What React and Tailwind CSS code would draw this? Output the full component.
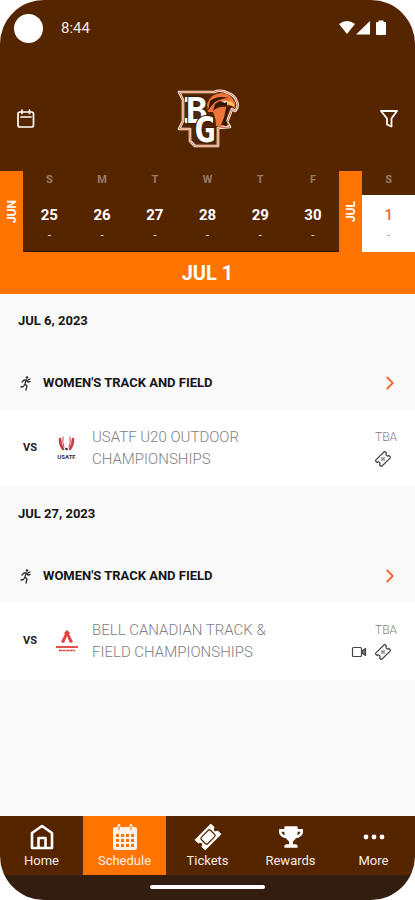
import { ChevronRight } from 'lucide-react';
import { FaTrophy } from 'react-icons/fa';

const juneDays = [
  { letter: 'S', date: 25 },
  { letter: 'M', date: 26 },
  { letter: 'T', date: 27 },
  { letter: 'W', date: 28 },
  { letter: 'T', date: 29 },
  { letter: 'F', date: 30 },
];

const julyDays = [{ letter: 'S', date: 1, selected: true }];

const events = [
  {
    date: 'JUL 6, 2023',
    sport: "WOMEN'S TRACK AND FIELD",
    title: 'USATF U20 OUTDOOR CHAMPIONSHIPS',
    time: 'TBA',
    Logo: UsatfLogo,
    hasVideo: false,
  },
  {
    date: 'JUL 27, 2023',
    sport: "WOMEN'S TRACK AND FIELD",
    title: 'BELL CANADIAN TRACK & FIELD CHAMPIONSHIPS',
    time: 'TBA',
    Logo: AthleticsCanadaLogo,
    hasVideo: true,
  },
];

const tabs = [
  { label: 'Home', Icon: HomeIcon },
  { label: 'Schedule', Icon: ScheduleIcon, active: true },
  { label: 'Tickets', Icon: TicketsIcon },
  { label: 'Rewards', Icon: RewardsIcon },
  { label: 'More', Icon: MoreIcon },
];

function TeamLogo() {
  const outline =
    'M1 2H31L36 2Q43 -1 50 3Q57 5 59 12Q61 17 57 21L54 19Q51 27 49 32L52 37L40 38V56H17L12 51V39H1L5 31V10Z';
  return (
    <svg viewBox="-1 -1 62 59" className="h-[59px] w-[62px] overflow-visible" role="img" aria-label="BG Falcons">
      <path d={outline} fill="#552500" stroke="#fff" strokeWidth="2.6" strokeLinejoin="round" />
      <path d={outline} fill="none" stroke="#e8622a" strokeWidth="1" strokeLinejoin="round" />
      <path d="M29 14Q33 3 44 3Q53 4 57 12Q58 15 56 17Q52 14 48 16Q49 25 46 36L38 36Q38 28 35 22L30 22Z" fill="#ee7439" />
      <path d="M32 11Q39 5 51 8Q44 8 37 12Q33 16 30 21Z" fill="#3a1800" />
      <path d="M37 14Q42 9 48 12L52 14L47 17Q41 16 35 21Z" fill="#3a1800" />
      <path d="M43 11H49L47 13Z" fill="#fff" />
      <path d="M49 11Q56 10 57 18Q53 14 49 15Z" fill="#f7c36a" />
      <path d="M48 18L51 17Q49 24 48 30L50 35H43Q47 27 48 18Z" fill="#3a1800" />
      {/* Serifs of the monogram */}
      <path d="M7 7H14V12H7ZM7 28H14V33H7Z" fill="#fff" />
      <g
        fill="#fff"
        stroke="#3a1800"
        strokeWidth="2"
        paintOrder="stroke"
        fontFamily="'DejaVu Sans Mono', monospace"
        fontWeight="700"
      >
        <text x="8" y="33" fontSize="36">B</text>
        <text x="16" y="52" fontSize="36">G</text>
      </g>
    </svg>
  );
}

function UsatfLogo() {
  return (
    <svg viewBox="0 0 24 24" className="size-6 overflow-visible" role="img" aria-label="USATF">
      <g fill="none" stroke="#c93b47" strokeLinecap="round">
        <path d="M5 3Q5 9 8 13" strokeWidth="2.6" />
        <path d="M8 1Q7 7 9 11" strokeWidth="1" />
        <path d="M18 3Q18 9 15 13" strokeWidth="2.6" />
        <path d="M15 1Q16 7 14 11" strokeWidth="1" />
      </g>
      <circle cx="11.5" cy="13" r="1.3" fill="#1e2a44" />
      <text x="11.5" y="23" fontSize="6" fontWeight="700" textAnchor="middle" fill="#333">
        USATF
      </text>
    </svg>
  );
}

function AthleticsCanadaLogo() {
  return (
    <svg viewBox="0 0 24 24" className="size-6" role="img" aria-label="Athletics Canada">
      <path d="M12 1L15 4L14 5L18 13L15 14L12 7L9 14L6 13L10 5L9 4Z" fill="#e2403c" />
      <path d="M1 18H23" stroke="#e2403c" strokeWidth="1.8" />
      <path d="M4 21.5H20" stroke="#e2403c" strokeWidth="1.6" strokeDasharray="3 .6" />
    </svg>
  );
}

function RunnerIcon() {
  return (
    <svg
      viewBox="0 0 14 16"
      className="h-4 w-[14px] shrink-0"
      fill="none"
      stroke="#333"
      strokeWidth="1.3"
      strokeLinecap="round"
      strokeLinejoin="round"
      aria-hidden="true"
    >
      <circle cx="9" cy="2.5" r="1.3" fill="#333" stroke="none" />
      <path d="M4 7L6 5L8.5 5L10 7L12 6.5M12 4L10 5M8 5.500L7 9L9 11L8 15M7 9L5.500 11.500L3 12" />
    </svg>
  );
}

function VideoIcon() {
  return (
    <svg viewBox="0 0 16 16" className="size-4" fill="none" stroke="#444" strokeWidth="1.2" aria-hidden="true">
      <rect x="1.5" y="3.5" width="9" height="9" rx="1" />
      <path d="M11 7L14.500 4.500V11.500L11 9Z" fill="#777" strokeLinejoin="round" />
    </svg>
  );
}

function TicketIcon() {
  return (
    <svg
      viewBox="0 0 24 24"
      className="size-4"
      fill="none"
      stroke="#444"
      strokeWidth="1.8"
      strokeLinejoin="round"
      aria-hidden="true"
    >
      <g transform="rotate(-45 12 12)">
        <path d="M2 5.500H22V9.500A2.500 2.500 0 0 0 22 14.500V18.500H2V14.500A2.500 2.500 0 0 0 2 9.500Z" />
        <path d="M12 9L13 11.200L15 12L13 12.800L12 15L11 12.800L9 12L11 11.200Z" strokeWidth="1" />
      </g>
    </svg>
  );
}

function HomeIcon() {
  return (
    <svg viewBox="0 0 26 28" className="h-7 w-[26px]" fill="none" stroke="#fff" strokeWidth="2.6" strokeLinejoin="round">
      <path d="M3 10L13 3L23 10V25H3Z" />
      <path d="M9.500 25V15H16.500V25" />
    </svg>
  );
}

function ScheduleIcon() {
  return (
    <svg viewBox="0 0 26 28" className="h-7 w-[26px]">
      <path
        d="M3 4H5.500V2.500A1.500 1.500 0 0 1 8.500 2.500V4H17.500V2.500A1.500 1.500 0 0 1 20.500 2.500V4H23A2 2 0 0 1 25 6V25A2 2 0 0 1 23 27H3A2 2 0 0 1 1 25V6A2 2 0 0 1 3 4Z"
        fill="#fff1e6"
      />
      <path
        d="M4 12.500H23M4 17.500H23M4 22.500H23"
        stroke="#ff7300"
        strokeWidth="3"
        strokeDasharray="3 2"
      />
      <path d="M7 3V7M19 3V7" stroke="#ff7300" strokeWidth="1" />
    </svg>
  );
}

function TicketsIcon() {
  return (
    <svg viewBox="0 0 28 28" className="size-7">
      <g transform="rotate(-45 14 14)">
        <path
          d="M3 7H25V11.500A2.500 2.500 0 0 0 25 16.500V21H3V16.500A2.500 2.500 0 0 0 3 11.500Z"
          fill="#fff"
          stroke="#fff"
          strokeLinejoin="round"
        />
        <rect x="7.500" y="9.500" width="13" height="9" rx="1.500" fill="none" stroke="#552500" strokeWidth="1.2" />
      </g>
    </svg>
  );
}

function RewardsIcon() {
  return <FaTrophy className="size-6 text-white" />;
}

function MoreIcon() {
  return (
    <svg viewBox="0 0 26 28" className="h-7 w-[26px]" fill="#fff">
      <circle cx="5" cy="14" r="2.4" />
      <circle cx="13" cy="14" r="2.4" />
      <circle cx="21" cy="14" r="2.4" />
    </svg>
  );
}

function CalendarIcon() {
  return (
    <svg
      viewBox="0 0 20 20"
      className="size-5"
      fill="none"
      stroke="#fff"
      strokeWidth="1.7"
      strokeLinecap="round"
      aria-hidden="true"
    >
      <rect x="2" y="3" width="15.5" height="15" rx="2" />
      <path d="M5 8H15M6 1V4.500M13.500 1V4.500" />
    </svg>
  );
}

function FilterIcon() {
  return (
    <svg
      viewBox="0 0 20 20"
      className="size-5"
      fill="none"
      stroke="#fff"
      strokeWidth="1.8"
      strokeLinejoin="round"
      aria-hidden="true"
    >
      <path d="M2 2H18L12.500 9.500V17.500L8 15.500V9.500Z" />
    </svg>
  );
}

function StatusBar() {
  return (
    <div className="flex h-14 items-center justify-between pr-7 pl-[14px]">
      <div className="flex items-center gap-[18px]">
        <span className="size-[29px] rounded-full bg-white" />
        <span className="text-[15px] text-[#f3e9e2]">8:44</span>
      </div>
      <svg viewBox="0 0 48 16" className="h-4 w-12" fill="#fff" aria-hidden="true">
        <path d="M0 4Q8 -2 16 4L8 14Z" />
        <path d="M17 14.500L31 1V14.500Z" />
        <path d="M37 3Q37 2 38 2H39.500V0.500H44.500V2H46Q47 2 47 3V14Q47 15 46 15H38Q37 15 37 14Z" />
      </svg>
    </div>
  );
}

function Day({ letter, date, selected }) {
  return (
    <div className="flex min-w-0 flex-1 flex-col text-center font-bold">
      <div className="flex h-6 items-start justify-center pt-[3px] text-[11px] leading-3 text-[#987c68]">{letter}</div>
      <button
        type="button"
        aria-pressed={Boolean(selected)}
        className={
          selected
            ? 'flex h-[57px] flex-col items-center bg-white pt-3 text-[#ef6634]'
            : 'flex h-[57px] flex-col items-center border-b border-[#2f1400] pt-3 text-white'
        }
      >
        <span className={selected ? 'text-[15px] leading-4 font-medium' : 'text-[15px] leading-4'}>{date}</span>
        <span className="text-xs leading-6 font-normal opacity-80">-</span>
      </button>
    </div>
  );
}

function MonthTab({ name }) {
  return (
    <div className="flex w-[23px] shrink-0 items-center justify-center bg-[#ff7300] text-xs font-bold text-white">
      <span className="rotate-180 [writing-mode:vertical-rl]">{name}</span>
    </div>
  );
}

function EventGroup({ event }) {
  const { date, sport, title, time, Logo, hasVideo } = event;
  return (
    <section>
      <h2 className="flex h-[54px] items-center px-[18px] text-[13px] font-bold text-[#161616]">{date}</h2>
      <a href="#sport" className="flex h-[62px] items-center px-[18px] pt-2">
        <RunnerIcon />
        <h3 className="ml-[11px] flex-1 text-[13px] font-bold text-[#161616]">{sport}</h3>
        <ChevronRight className="-mr-1 size-[22px] text-[#f26a2e]" strokeWidth={2} />
      </a>
      <a href="#event" className="flex min-h-[77px] items-start bg-white px-[18px] pt-4 pb-[17px] text-[#808080]">
        <span className="flex h-11 w-6 items-center justify-center text-[11px] font-bold text-[#222]">VS</span>
        <span className="ml-[13px] flex h-11 w-6 items-center justify-center">
          <Logo />
        </span>
        <span className="ml-[13px] w-[190px] text-[15px] leading-[22px] font-light">{title}</span>
        <span className="ml-auto flex flex-col items-end">
          <span className="text-xs leading-[22px] font-light">{time}</span>
          <span className="flex h-[22px] items-center gap-2 pr-[6px]">
            {hasVideo && <VideoIcon />}
            <TicketIcon />
          </span>
        </span>
      </a>
    </section>
  );
}

const App = () => {
  return (
    <div className="min-h-screen bg-white font-['Roboto','Liberation_Sans',sans-serif]">
      <div className="flex min-h-screen flex-col overflow-hidden rounded-[44px] bg-[#f9f9f9]">
        <header className="bg-[#552500]">
          <StatusBar />
          <div className="flex h-[115px] items-center justify-between px-4">
            <button type="button" aria-label="Open calendar" className="pt-2.5">
              <CalendarIcon />
            </button>
            <div className="pt-2.5">
              <TeamLogo />
            </div>
            <button type="button" aria-label="Filter" className="pt-2.5">
              <FilterIcon />
            </button>
          </div>

          {/* Day strip */}
          <div className="flex h-[81px]">
            <MonthTab name="JUN" />
            {juneDays.map((day) => (
              <Day key={day.date} {...day} />
            ))}
            <MonthTab name="JUL" />
            {julyDays.map((day) => (
              <Day key={day.date} {...day} />
            ))}
          </div>
        </header>

        <h1 className="flex h-[42px] items-center justify-center bg-[#ff7300] text-xl font-bold text-white">
          JUL 1
        </h1>

        <main className="flex-1">
          {events.map((event) => (
            <EventGroup key={event.date} event={event} />
          ))}
        </main>

        {/* Bottom tabs */}
        <nav className="grid h-[59px] grid-cols-5 bg-[#552500]">
          {tabs.map(({ label, Icon, active }) => (
            <a
              key={label}
              href={`#${label.toLowerCase()}`}
              aria-current={active ? 'page' : undefined}
              className={
                active
                  ? 'flex flex-col items-center bg-[#ff7300] pt-[7px] text-[13px] text-[#fff1e6]'
                  : 'flex flex-col items-center pt-[7px] text-[13px] text-[#f5ebe4]'
              }
            >
              <span className="flex h-7 items-center">
                <Icon />
              </span>
              <span className="leading-[19px]">{label}</span>
            </a>
          ))}
        </nav>
        <div className="flex h-[25px] justify-center bg-[#321d10] pt-[10px]">
          <span className="h-1 w-[115px] rounded-full bg-white" />
        </div>
      </div>
    </div>
  );
};

export default App;
